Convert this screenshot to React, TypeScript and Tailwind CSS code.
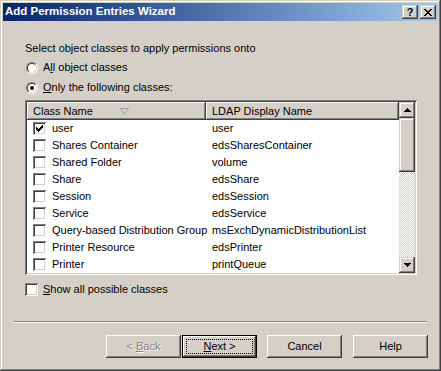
import React from "react";

const raised = "bg-[#d4d0c8] shadow-[inset_-1px_-1px_#404040,inset_1px_1px_#fff,inset_-2px_-2px_#808080]";
const raisedSb = "bg-[#d4d0c8] shadow-[inset_-1px_-1px_#404040,inset_1px_1px_#d4d0c8,inset_-2px_-2px_#808080,inset_2px_2px_#fff]";
const sunken = "shadow-[inset_1px_1px_#808080,inset_-1px_-1px_#fff,inset_2px_2px_#404040,inset_-2px_-2px_#d4d0c8]";

const rows: [string, string, boolean?][] = [
    ["user", "user", true],
    ["Shares Container", "edsSharesContainer"],
    ["Shared Folder", "volume"],
    ["Share", "edsShare"],
    ["Session", "edsSession"],
    ["Service", "edsService"],
    ["Query-based Distribution Group", "msExchDynamicDistributionList"],
    ["Printer Resource", "edsPrinter"],
    ["Printer", "printQueue"],
];

function CheckBox({ checked }: { checked?: boolean }) {
    return (
        <div className={`w-[13px] h-[13px] bg-white shrink-0 relative ${sunken}`}>
            {checked &&
                <svg className="absolute left-0 top-0" width="13" height="13" viewBox="0 0 13 13" shapeRendering="crispEdges">
                    <rect x="3" y="5" width="1" height="3" fill="#000" />
                    <rect x="4" y="6" width="1" height="3" fill="#000" />
                    <rect x="5" y="7" width="1" height="3" fill="#000" />
                    <rect x="6" y="6" width="1" height="3" fill="#000" />
                    <rect x="7" y="5" width="1" height="3" fill="#000" />
                    <rect x="8" y="4" width="1" height="3" fill="#000" />
                    <rect x="9" y="3" width="1" height="3" fill="#000" />
                </svg>
            }
        </div>
    );
}

function Radio({ checked }: { checked?: boolean }) {
    return (
        <div className="w-[12px] h-[12px] rounded-full border border-t-[#808080] border-l-[#808080] border-b-white border-r-white shrink-0">
            <div className="w-full h-full rounded-full border border-t-[#404040] border-l-[#404040] border-b-[#d4d0c8] border-r-[#d4d0c8] bg-white flex items-center justify-center">
                {checked && <div className="w-[4px] h-[4px] rounded-full bg-black" />}
            </div>
        </div>
    );
}

function Arrow({ up }: { up?: boolean }) {
    return (
        <svg width="7" height="4" viewBox="0 0 7 4" shapeRendering="crispEdges" className={up ? "" : "rotate-180"}>
            <rect x="3" y="0" width="1" height="1" fill="#000" />
            <rect x="2" y="1" width="3" height="1" fill="#000" />
            <rect x="1" y="2" width="5" height="1" fill="#000" />
            <rect x="0" y="3" width="7" height="1" fill="#000" />
        </svg>
    );
}

export default function App() {
    return (
        <div className="w-[441px] h-[371px] bg-[#d4d0c8] p-[3px] flex flex-col font-['Liberation_Sans',Arial,sans-serif] text-[11px] text-black shadow-[inset_-1px_-1px_#404040,inset_1px_1px_#d4d0c8,inset_-2px_-2px_#808080,inset_2px_2px_#fff]">
            {/* title bar */}
            <div className="h-[18px] flex items-center bg-linear-to-r from-[#0a246a] to-[#a6caf0] pl-[2px] pr-[2px]">
                <span className="text-white font-bold text-[11.5px] leading-none flex-1">Add Permission Entries Wizard</span>
                <div className={`w-[16px] h-[14px] flex items-center justify-center ${raisedSb}`}>
                    <span className="font-bold text-[11px] leading-none">?</span>
                </div>
                <div className={`w-[16px] h-[14px] ml-[2px] flex items-center justify-center ${raisedSb}`}>
                    <svg width="8" height="7" viewBox="0 0 8 7" shapeRendering="crispEdges">
                        <path d="M0 0h2v1h-2zM6 0h2v1h-2zM1 1h2v1h-2zM5 1h2v1h-2zM2 2h4v1h-4zM3 3h2v1h-2zM2 4h4v1h-4zM1 5h2v1h-2zM5 5h2v1h-2zM0 6h2v1h-2zM6 6h2v1h-2z" fill="#000" />
                    </svg>
                </div>
            </div>

            <div className="flex flex-col pl-[22px]">
                <div className="mt-[21px] h-[13px] leading-[13px]">Select object classes to apply permissions onto</div>
                <div className="mt-[6px] h-[13px] flex items-center">
                    <div className="ml-[1px]"><Radio /></div>
                    <span className="ml-[5px] leading-[13px]">A<u>l</u>l object classes</span>
                </div>
                <div className="mt-[7px] h-[13px] flex items-center">
                    <div className="ml-[1px]"><Radio checked /></div>
                    <span className="ml-[5px] leading-[13px]"><u>O</u>nly the following classes:</span>
                </div>

                {/* list view */}
                <div className={`mt-[6px] w-[392px] h-[175px] bg-white p-[2px] flex ${sunken}`}>
                    <div className="flex-1 flex flex-col overflow-hidden">
                        <div className="h-[18px] flex shrink-0">
                            <div className={`w-[179px] flex items-center pl-[6px] ${raised}`}>
                                <span>Class Name</span>
                                <svg className="ml-[27px]" width="9" height="7" viewBox="0 0 9 7" shapeRendering="crispEdges">
                                    <path d="M0.5 0.5 L8.5 0.5 L4.5 6.5 Z" fill="none" stroke="#a0a0a0" strokeWidth="1" shapeRendering="auto" />
                                </svg>
                            </div>
                            <div className={`flex-1 flex items-center pl-[6px] ${raised}`}>LDAP Display Name</div>
                        </div>
                        {rows.map(([name, ldap, checked]) => (
                            <div key={name} className="h-[17px] flex items-center shrink-0">
                                <div className="w-[179px] flex items-center pl-[6px]">
                                    <CheckBox checked={checked} />
                                    <span className="ml-[6px] whitespace-nowrap">{name}</span>
                                </div>
                                <div className="pl-[6px] whitespace-nowrap">{ldap}</div>
                            </div>
                        ))}
                    </div>
                    {/* scrollbar */}
                    <div className="w-[16px] flex flex-col">
                        <div className={`h-[16px] flex items-center justify-center ${raisedSb}`}><Arrow up /></div>
                        <div className={`h-[54px] ${raisedSb}`} />
                        <div className="flex-1 bg-[image:repeating-conic-gradient(#fff_0_25%,#d4d0c8_0_50%)] bg-[length:2px_2px]" />
                        <div className={`h-[16px] flex items-center justify-center ${raisedSb}`}><Arrow /></div>
                    </div>
                </div>

                <div className="mt-[8px] h-[13px] flex items-center">
                    <CheckBox />
                    <span className="ml-[5px] leading-[13px]"><u>S</u>how all possible classes</span>
                </div>
            </div>

            <div className="mt-[25px] ml-[11px] w-[413px] h-[2px] border-t border-t-[#808080] border-b border-b-white" />

            <div className="mt-[12px] flex pl-[103px]">
                <div className={`w-[75px] h-[23px] flex items-center justify-center text-[#808080] [text-shadow:1px_1px_0_#fff] ${raised}`}>
                    &lt; <u className="ml-[3px]">B</u>ack
                </div>
                <div className="ml-[1px] w-[75px] h-[23px] border border-black">
                    <div className={`w-full h-full p-[3px] ${raised}`}>
                        <div className="w-full h-full border border-dotted border-black flex items-center justify-center">
                            <span><u>N</u>ext &gt;</span>
                        </div>
                    </div>
                </div>
                <div className={`ml-[10px] w-[75px] h-[23px] flex items-center justify-center ${raised}`}>Cancel</div>
                <div className={`ml-[11px] w-[75px] h-[23px] flex items-center justify-center ${raised}`}>Help</div>
            </div>
        </div>
    );
}
